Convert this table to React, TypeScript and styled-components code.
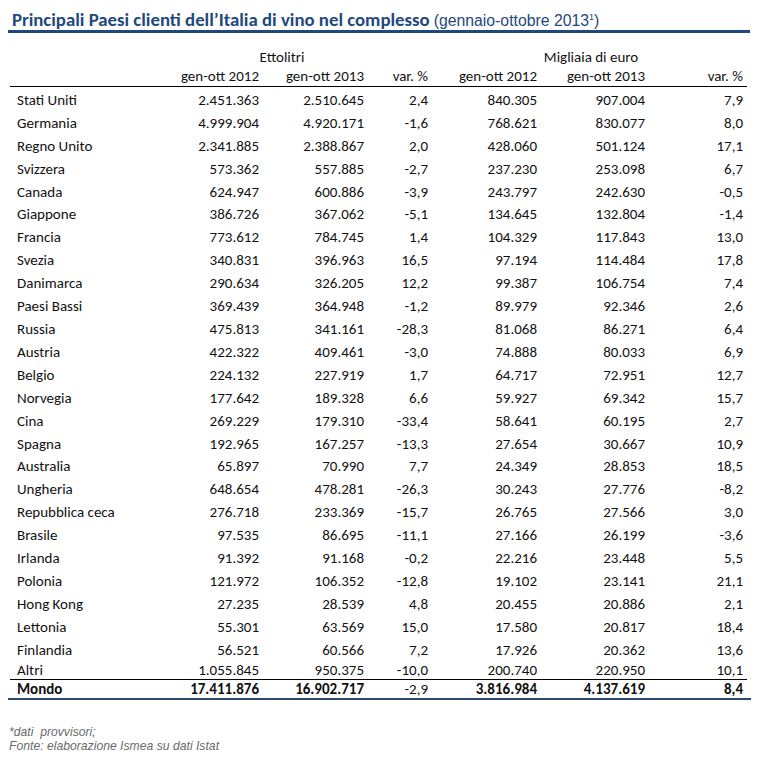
import React from 'react';
import styled, { createGlobalStyle } from 'styled-components';

const COLS = '155px 94px 105px 64px 109px 108px 98px';
const BLUE = '#1f497d';

const GlobalStyle = createGlobalStyle`
  body {
    margin: 0;
    background: #ffffff;
  }
`;

const Page = styled.div`
  width: 779px;
  height: 758px;
  background: #ffffff;
  font-family: Carlito, Lato, 'Open Sans', sans-serif;
  color: #111111;
  display: flex;
  flex-direction: column;
`;

const TitleRow = styled.div`
  display: flex;
  align-items: baseline;
  padding: 9px 0 0 12px;
  height: 21px;
  line-height: 21px;
  white-space: nowrap;
  color: ${BLUE};
`;

const TitleMain = styled.span`
  font-family: Carlito, Lato, sans-serif;
  font-weight: 700;
  font-size: 18.8px;
`;

const TitleSub = styled.span`
  font-family: 'Liberation Sans', Arial, sans-serif;
  font-size: 15.8px;
  margin-left: 4px;
`;

const Sup = styled.sup`
  font-size: 9px;
  line-height: 0;
`;

const TitleRule = styled.div`
  margin-left: 8px;
  width: 742px;
  height: 3px;
  background: ${BLUE};
`;

const Table = styled.div`
  margin-left: 10px;
  width: 737px;
  padding-top: 14px;
  font-size: 15px;
`;

const HeadRow = styled.div<{ ruled?: boolean }>`
  display: grid;
  grid-template-columns: ${COLS};
  height: ${p => (p.ruled ? '19px' : '20px')};
  line-height: ${p => (p.ruled ? '19px' : '20px')};
  border-bottom: ${p => (p.ruled ? '1px solid #000' : 'none')};
`;

const GroupLabel = styled.div<{ side: 'left' | 'right' }>`
  grid-column: ${p => (p.side === 'left' ? '2 / 5' : '5 / 8')};
  text-align: center;
  padding-right: ${p => (p.side === 'left' ? '29px' : '0')};
  padding-left: ${p => (p.side === 'right' ? '11px' : '0')};
`;

const Body = styled.div`
  padding-top: 1.5px;
`;

const Row = styled.div<{ short?: boolean }>`
  display: grid;
  grid-template-columns: ${COLS};
  align-items: center;
  height: ${p => (p.short ? '17.5px' : '22.92px')};
  line-height: 16px;
`;

const TotalRow = styled.div`
  display: grid;
  grid-template-columns: ${COLS};
  align-items: center;
  height: 18px;
  line-height: 18px;
  border-top: 1px solid #000;
  font-weight: 700;
`;

const Cell = styled.div<{ first?: boolean; light?: boolean }>`
  text-align: ${p => (p.first ? 'left' : 'right')};
  padding-left: ${p => (p.first ? '7px' : '0')};
  font-weight: ${p => (p.light ? 400 : 'inherit')};
  white-space: nowrap;
`;

const BottomRule = styled.div`
  margin-left: 8px;
  width: 743px;
  height: 2px;
  background: #2b4a6d;
`;

const Notes = styled.div`
  margin-top: 25px;
  padding-left: 9px;
  font-family: 'Liberation Sans', Arial, sans-serif;
  font-style: italic;
  font-size: 12.2px;
  line-height: 14px;
  color: #6a6a6a;
  white-space: pre;
`;

const rows: string[][] = [
  ['Stati Uniti', '2.451.363', '2.510.645', '2,4', '840.305', '907.004', '7,9'],
  ['Germania', '4.999.904', '4.920.171', '-1,6', '768.621', '830.077', '8,0'],
  ['Regno Unito', '2.341.885', '2.388.867', '2,0', '428.060', '501.124', '17,1'],
  ['Svizzera', '573.362', '557.885', '-2,7', '237.230', '253.098', '6,7'],
  ['Canada', '624.947', '600.886', '-3,9', '243.797', '242.630', '-0,5'],
  ['Giappone', '386.726', '367.062', '-5,1', '134.645', '132.804', '-1,4'],
  ['Francia', '773.612', '784.745', '1,4', '104.329', '117.843', '13,0'],
  ['Svezia', '340.831', '396.963', '16,5', '97.194', '114.484', '17,8'],
  ['Danimarca', '290.634', '326.205', '12,2', '99.387', '106.754', '7,4'],
  ['Paesi Bassi', '369.439', '364.948', '-1,2', '89.979', '92.346', '2,6'],
  ['Russia', '475.813', '341.161', '-28,3', '81.068', '86.271', '6,4'],
  ['Austria', '422.322', '409.461', '-3,0', '74.888', '80.033', '6,9'],
  ['Belgio', '224.132', '227.919', '1,7', '64.717', '72.951', '12,7'],
  ['Norvegia', '177.642', '189.328', '6,6', '59.927', '69.342', '15,7'],
  ['Cina', '269.229', '179.310', '-33,4', '58.641', '60.195', '2,7'],
  ['Spagna', '192.965', '167.257', '-13,3', '27.654', '30.667', '10,9'],
  ['Australia', '65.897', '70.990', '7,7', '24.349', '28.853', '18,5'],
  ['Ungheria', '648.654', '478.281', '-26,3', '30.243', '27.776', '-8,2'],
  ['Repubblica ceca', '276.718', '233.369', '-15,7', '26.765', '27.566', '3,0'],
  ['Brasile', '97.535', '86.695', '-11,1', '27.166', '26.199', '-3,6'],
  ['Irlanda', '91.392', '91.168', '-0,2', '22.216', '23.448', '5,5'],
  ['Polonia', '121.972', '106.352', '-12,8', '19.102', '23.141', '21,1'],
  ['Hong Kong', '27.235', '28.539', '4,8', '20.455', '20.886', '2,1'],
  ['Lettonia', '55.301', '63.569', '15,0', '17.580', '20.817', '18,4'],
  ['Finlandia', '56.521', '60.566', '7,2', '17.926', '20.362', '13,6'],
];

const others = ['Altri', '1.055.845', '950.375', '-10,0', '200.740', '220.950', '10,1'];
const total = ['Mondo', '17.411.876', '16.902.717', '-2,9', '3.816.984', '4.137.619', '8,4'];
const subHeads = ['gen-ott 2012', 'gen-ott 2013', 'var. %', 'gen-ott 2012', 'gen-ott 2013', 'var. %'];

export default function App() {
  return (
    <Page>
      <GlobalStyle />
      <TitleRow>
        <TitleMain>Principali Paesi clienti dell’Italia di vino nel complesso</TitleMain>
        <TitleSub>
          (gennaio-ottobre 2013<Sup>1</Sup>)
        </TitleSub>
      </TitleRow>
      <TitleRule />
      <Table>
        <HeadRow>
          <GroupLabel side="left">Ettolitri</GroupLabel>
          <GroupLabel side="right">Migliaia di euro</GroupLabel>
        </HeadRow>
        <HeadRow ruled>
          <Cell first />
          {subHeads.map((h, i) => (
            <Cell key={i}>{h}</Cell>
          ))}
        </HeadRow>
        <Body>
          {rows.map(r => (
            <Row key={r[0]}>
              {r.map((v, i) => (
                <Cell key={i} first={i === 0}>{v}</Cell>
              ))}
            </Row>
          ))}
          <Row short>
            {others.map((v, i) => (
              <Cell key={i} first={i === 0}>{v}</Cell>
            ))}
          </Row>
        </Body>
        <TotalRow>
          {total.map((v, i) => (
            <Cell key={i} first={i === 0} light={i === 3}>{v}</Cell>
          ))}
        </TotalRow>
      </Table>
      <BottomRule />
      <Notes>{'*dati  provvisori;\nFonte: elaborazione Ismea su dati Istat'}</Notes>
    </Page>
  );
}
